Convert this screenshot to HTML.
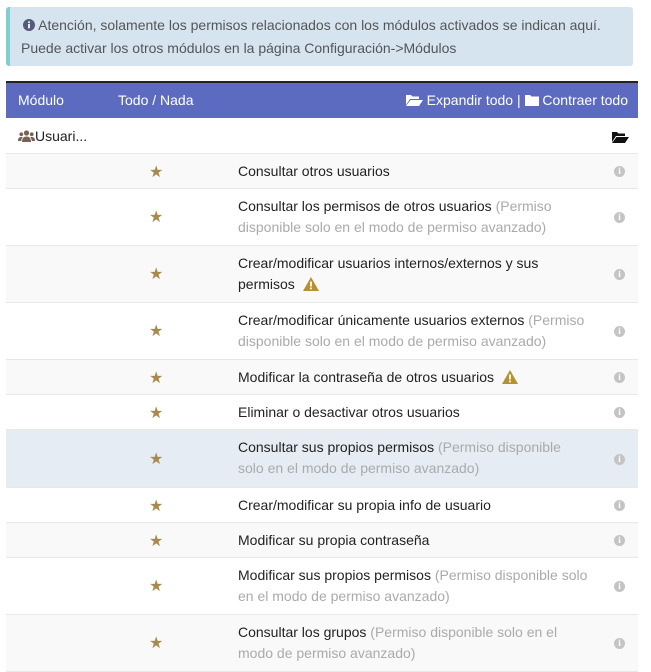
<!DOCTYPE html>
<html><head><meta charset="utf-8"><style>
body{margin:0;background:#fff;font-family:"Liberation Sans",Arial,sans-serif;font-size:14px;color:#222;width:651px;height:660px;overflow:hidden;position:relative}
.alert{position:absolute;left:6px;top:7px;width:627px;height:59px;background:#d6e4f0;border-left:4px solid #7fcfcf;border-radius:3px;color:#555;font-size:14px;line-height:23px;padding-top:7px;box-sizing:border-box;padding-left:13px}
.hdr{position:absolute;left:6px;top:81px;width:632px;height:37px;background:#5c6bc0;border-top:2px solid #222;box-sizing:border-box;color:#fff;font-size:14px}
.hdr span{position:absolute;top:9px}
.row{position:absolute;left:6px;width:632px;border-bottom:1px solid #e8e8e8;box-sizing:border-box}
.g{background:#f9f9f9}
.h{background:#e5ecf4}
.txt{position:absolute;left:232px;width:351px;line-height:21px}
.m{color:#aaa}
.star{position:absolute;left:143px;color:#a88a4e;font-size:16px;line-height:16px}
.inf{position:absolute;left:608px;width:11px;height:11px;border-radius:50%;background:#c4c4c4;color:#fff;font-size:9px;font-weight:bold;text-align:center;line-height:11px;font-family:"Liberation Serif",serif}
.warn{display:inline-block;vertical-align:-2px;margin-left:4px}
</style></head><body>
<div class="alert"><svg width="12" height="12" viewBox="0 0 12 12" style="vertical-align:-1px"><circle cx="6" cy="6" r="6" fill="#55597a"/><rect x="5.1" y="5" width="1.8" height="4.3" fill="#fff"/><circle cx="6" cy="3.2" r="1" fill="#fff"/></svg> Atención, solamente los permisos relacionados con los módulos activados se indican aquí.<br><span style="margin-left:-2px">Puede activar los otros módulos en la página Configuración-&gt;Módulos</span></div>
<div class="hdr"><span style="left:12px">Módulo</span><span style="left:112px">Todo / Nada</span><span style="right:10px">
<svg width="17" height="12" viewBox="0 0 17 12" style="vertical-align:-1px"><path d="M0 1h5l1.5 1.5H13V5H4L0 11z M4.5 6H17L13 12H0z" fill="#fff"/></svg> Expandir todo | <svg width="14" height="12" viewBox="0 0 14 12" style="vertical-align:-1px"><path d="M0 1h5l1.5 1.5H14V12H0z" fill="#fff"/></svg> Contraer todo</span></div>

<div class="row" style="top:118px;height:36px"><span style="position:absolute;left:12px;top:10px"><svg width="17" height="12" viewBox="0 0 17 12" style="vertical-align:-1px"><circle cx="8.5" cy="3" r="2.6" fill="#7a6253"/><circle cx="3.3" cy="4.3" r="1.9" fill="#7a6253"/><circle cx="13.7" cy="4.3" r="1.9" fill="#7a6253"/><path d="M4 12c0-4 2-5.5 4.5-5.5S13 8 13 12z M0 11c0-3 1.3-4 3.3-4 1 0 1.5.4 1.5.4C3.6 8.6 3.2 10 3.2 11z M17 11c0-3-1.3-4-3.3-4-1 0-1.5.4-1.5.4 1.2 1.2 1.6 2.6 1.6 3.6z" fill="#7a6253"/></svg>Usuari...</span>
<svg style="position:absolute;left:606px;top:13px" width="17" height="12" viewBox="0 0 17 12"><path d="M0 1h5l1.5 1.5H13V5H4L0 11z M4.5 6H17L13 12H0z" fill="#111"/></svg></div>

<div class="row g" style="top:154px;height:35px"><span class="star" style="top:11px">★</span><div class="txt" style="top:7px">Consultar otros usuarios</div><span class="inf" style="top:12px">i</span></div>
<div class="row" style="top:189px;height:57px"><span class="star" style="top:21px">★</span><div class="txt" style="top:7px">Consultar los permisos de otros usuarios <span class="m">(Permiso disponible solo en el modo de permiso avanzado)</span></div><span class="inf" style="top:23px">i</span></div>
<div class="row g" style="top:246px;height:57px"><span class="star" style="top:21px">★</span><div class="txt" style="top:7px">Crear/modificar usuarios internos/externos y sus permisos <svg class="warn" width="16" height="14" viewBox="0 0 16 14"><path d="M8 0L16 14H0z" fill="#b8912f"/><rect x="7.1" y="4.5" width="1.8" height="5" fill="#fff"/><rect x="7.1" y="10.5" width="1.8" height="1.8" fill="#fff"/></svg></div><span class="inf" style="top:23px">i</span></div>
<div class="row" style="top:303px;height:57px"><span class="star" style="top:21px">★</span><div class="txt" style="top:7px">Crear/modificar únicamente usuarios externos <span class="m">(Permiso disponible solo en el modo de permiso avanzado)</span></div><span class="inf" style="top:23px">i</span></div>
<div class="row g" style="top:360px;height:35px"><span class="star" style="top:11px">★</span><div class="txt" style="top:7px">Modificar la contraseña de otros usuarios <svg class="warn" width="16" height="14" viewBox="0 0 16 14"><path d="M8 0L16 14H0z" fill="#b8912f"/><rect x="7.1" y="4.5" width="1.8" height="5" fill="#fff"/><rect x="7.1" y="10.5" width="1.8" height="1.8" fill="#fff"/></svg></div><span class="inf" style="top:12px">i</span></div>
<div class="row" style="top:395px;height:35px"><span class="star" style="top:11px">★</span><div class="txt" style="top:7px">Eliminar o desactivar otros usuarios</div><span class="inf" style="top:12px">i</span></div>
<div class="row h" style="top:430px;height:58px"><span class="star" style="top:22px">★</span><div class="txt" style="top:7px">Consultar sus propios permisos <span class="m">(Permiso disponible solo en el modo de permiso avanzado)</span></div><span class="inf" style="top:24px">i</span></div>
<div class="row" style="top:488px;height:35px"><span class="star" style="top:11px">★</span><div class="txt" style="top:7px">Crear/modificar su propia info de usuario</div><span class="inf" style="top:12px">i</span></div>
<div class="row g" style="top:523px;height:35px"><span class="star" style="top:11px">★</span><div class="txt" style="top:7px">Modificar su propia contraseña</div><span class="inf" style="top:12px">i</span></div>
<div class="row" style="top:558px;height:57px"><span class="star" style="top:21px">★</span><div class="txt" style="top:7px">Modificar sus propios permisos <span class="m">(Permiso disponible solo en el modo de permiso avanzado)</span></div><span class="inf" style="top:23px">i</span></div>
<div class="row g" style="top:615px;height:57px"><span class="star" style="top:21px">★</span><div class="txt" style="top:7px">Consultar los grupos <span class="m">(Permiso disponible solo en el modo de permiso avanzado)</span></div><span class="inf" style="top:23px">i</span></div>
</body></html>
